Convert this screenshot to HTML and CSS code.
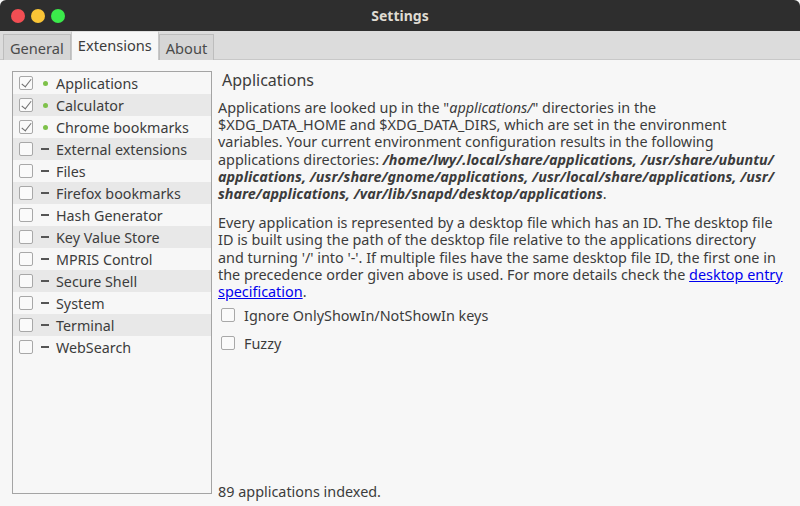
FILE: index.html
```html
<!DOCTYPE html>
<html>
<head>
<meta charset="utf-8">
<link rel="stylesheet" href="styles.css">
</head>
<body>
<div class="window">
  <div class="titlebar">
    <div class="lights">
      <span class="light red"></span>
      <span class="light yellow"></span>
      <span class="light green"></span>
    </div>
    <div class="title">Settings</div>
  </div>
  <div class="tabbar">
    <div class="tab">General</div>
    <div class="tab active">Extensions</div>
    <div class="tab">About</div>
  </div>
  <div class="main">
    <div class="list">
      <div class="row"><span class="cb checked"></span><span class="dot"></span><span class="label">Applications</span></div>
      <div class="row alt"><span class="cb checked"></span><span class="dot"></span><span class="label">Calculator</span></div>
      <div class="row"><span class="cb checked"></span><span class="dot"></span><span class="label">Chrome bookmarks</span></div>
      <div class="row alt"><span class="cb"></span><span class="dash"></span><span class="label">External extensions</span></div>
      <div class="row"><span class="cb"></span><span class="dash"></span><span class="label">Files</span></div>
      <div class="row alt"><span class="cb"></span><span class="dash"></span><span class="label">Firefox bookmarks</span></div>
      <div class="row"><span class="cb"></span><span class="dash"></span><span class="label">Hash Generator</span></div>
      <div class="row alt"><span class="cb"></span><span class="dash"></span><span class="label">Key Value Store</span></div>
      <div class="row"><span class="cb"></span><span class="dash"></span><span class="label">MPRIS Control</span></div>
      <div class="row alt"><span class="cb"></span><span class="dash"></span><span class="label">Secure Shell</span></div>
      <div class="row"><span class="cb"></span><span class="dash"></span><span class="label">System</span></div>
      <div class="row alt"><span class="cb"></span><span class="dash"></span><span class="label">Terminal</span></div>
      <div class="row"><span class="cb"></span><span class="dash"></span><span class="label">WebSearch</span></div>
    </div>
    <div class="detail">
      <div class="heading">Applications</div>
      <p class="para">Applications are looked up in the "<i>applications/</i>" directories in the<br>$XDG_DATA_HOME and $XDG_DATA_DIRS, which are set in the environment<br>variables. Your current environment configuration results in the following<br>applications directories: <b><i>/home/lwy/.local/share/applications, /usr/share/ubuntu/<br>applications, /usr/share/gnome/applications, /usr/local/share/applications, /usr/<br>share/applications, /var/lib/snapd/desktop/applications</i></b>.</p>
      <p class="para second">Every application is represented by a desktop file which has an ID. The desktop file<br>ID is built using the path of the desktop file relative to the applications directory<br>and turning '/' into '-'. If multiple files have the same desktop file ID, the first one in<br>the precedence order given above is used. For more details check the <a class="link" href="#">desktop entry<br>specification</a>.</p>
      <div class="option first"><span class="cb"></span><span>Ignore OnlyShowIn/NotShowIn keys</span></div>
      <div class="option"><span class="cb"></span><span>Fuzzy</span></div>
      <div class="spacer"></div>
      <div class="status">89 applications indexed.</div>
    </div>
  </div>
</div>
</body>
</html>
```
FILE: styles.css
```css
html, body {
  margin: 0;
  padding: 0;
}
body {
  width: 800px;
  height: 506px;
  overflow: hidden;
  background: #f7f7f7;
  font-family: "Noto Sans", "Open Sans", sans-serif;
  color: #3c3c3c;
}
.window {
  display: flex;
  flex-direction: column;
  height: 506px;
}
.titlebar {
  height: 31px;
  background: #2e2e2e;
  border-radius: 6px 6px 0 0;
  display: flex;
  align-items: center;
  justify-content: center;
  position: relative;
  flex: none;
}
.lights {
  position: absolute;
  left: 11px;
  top: 9px;
  display: flex;
  gap: 6px;
}
.light {
  width: 14px;
  height: 14px;
  border-radius: 50%;
  display: block;
}
.red { background: #f24e53; }
.yellow { background: #fac536; }
.green { background: #3bea4b; }
.title {
  color: #dfdbd2;
  font-weight: bold;
  font-size: 14px;
  margin-top: -1px;
}
.tabbar {
  height: 29px;
  background: #dcdcdc;
  display: flex;
  align-items: flex-end;
  padding-left: 3px;
  flex: none;
  border-bottom: 1px solid #c8c8c8;
  box-sizing: border-box;
}
.tab {
  height: 26px;
  box-sizing: border-box;
  padding: 0 6px;
  border: 1px solid #bdbdbd;
  border-bottom: none;
  background: #d6d6d6;
  font-size: 14.6px;
  line-height: 26px;
  color: #4a4a4a;
  margin-bottom: -1px;
}
.tab.active {
  height: 29px;
  line-height: 27px;
  padding: 0 6px;
  background: #f7f7f7;
  border-color: #c8c8c8;
  border-top: 1px solid #e0e0e0;
  color: #3c3c3c;
  margin-bottom: -1px;
}
.main {
  flex: 1;
  display: flex;
  padding: 11px 12px 12px 12px;
  min-height: 0;
}
.list {
  width: 200px;
  box-sizing: border-box;
  border: 1px solid #a4a4a4;
  background: #f7f7f7;
  flex: none;
}
.row {
  height: 22px;
  display: flex;
  align-items: center;
  font-size: 14.3px;
  color: #3c3c3c;
}
.row.alt {
  background: #e8e8e8;
}
.cb {
  width: 12px;
  height: 12px;
  border: 1px solid #a8a8a8;
  border-radius: 2px;
  background: #fafafa;
  display: inline-block;
  position: relative;
  flex: none;
}
.row .cb {
  margin-left: 6px;
}
.cb.checked::after {
  content: "";
  position: absolute;
  left: 3.5px;
  top: -0.5px;
  width: 4px;
  height: 9px;
  border-right: 1.3px solid #707070;
  border-bottom: 1.3px solid #707070;
  transform: rotate(38deg);
}
.dot {
  width: 5px;
  height: 5px;
  border-radius: 50%;
  background: #7ec14a;
  margin-left: 10px;
  margin-right: 8px;
  flex: none;
}
.dash {
  width: 8px;
  height: 2px;
  background: #555;
  margin-left: 8px;
  margin-right: 7px;
  flex: none;
}
.label {
  white-space: nowrap;
}
.detail {
  flex: 1;
  display: flex;
  flex-direction: column;
  padding-left: 6px;
  min-width: 0;
}
.heading {
  font-size: 16px;
  line-height: 20px;
  margin-top: -1px;
  padding-left: 4px;
}
.para {
  margin: 9px 0 0 0;
  font-size: 14.4px;
  line-height: 17.2px;
  white-space: nowrap;
}
.para.second {
  margin-top: 12px;
}
.link {
  color: #0000ee;
  text-decoration: underline;
}
.option {
  display: flex;
  align-items: center;
  height: 28px;
  font-size: 14.4px;
}
.option.first {
  margin-top: 1px;
}
.option .cb {
  margin-left: 3px;
  margin-right: 9px;
}
.spacer {
  flex: 1;
}
.status {
  font-size: 14.4px;
  line-height: 17px;
  margin-bottom: -6px;
}
```
